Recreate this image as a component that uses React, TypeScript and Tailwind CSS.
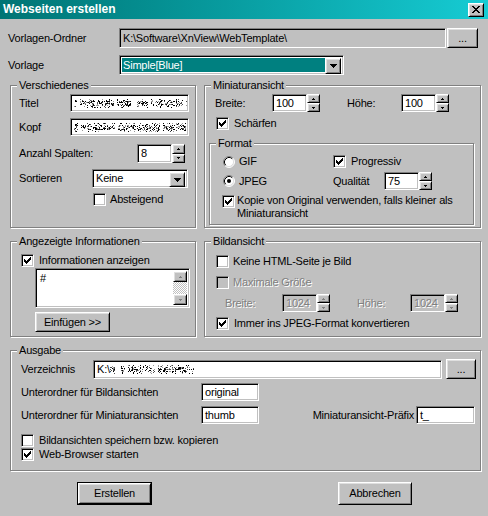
import React from "react";

const sunken =
  "border border-t-[#808080] border-l-[#808080] border-r-white border-b-white shadow-[inset_1px_1px_0_#000,inset_-1px_-1px_0_#c0c0c0]";
const raised =
  "border border-t-white border-l-white border-r-black border-b-black shadow-[inset_1px_1px_0_#dfdfdf,inset_-1px_-1px_0_#808080]";
const disabledText = "text-[#808080] [text-shadow:1px_1px_0_#ffffff]";

function rng(seed: number) {
  let s = seed;
  return () => {
    s = (s * 1103515245 + 12345) & 0x7fffffff;
    return s / 0x7fffffff;
  };
}

function Noise({ w, h, seed }: { w: number; h: number; seed: number }) {
  const r = rng(seed);
  const rects: React.ReactNode[] = [];
  let gap = 0;
  for (let x = 0; x < w; x++) {
    if (gap > 0) {
      gap--;
      continue;
    }
    if (r() < 0.05) {
      gap = 2;
      continue;
    }
    for (let y = 0; y < h; y++) {
      const mid = y >= 2 && y <= h - 3;
      const v = r();
      if (v < (mid ? 0.42 : 0.18)) {
        const t = r();
        const c = t < 0.5 ? "#000000" : t < 0.78 ? "#4a4a4a" : "#9a9a9a";
        rects.push(<rect key={x + "_" + y} x={x} y={y} width={1} height={1} fill={c} />);
      }
    }
  }
  return (
    <svg width={w} height={h} className="block shrink-0">
      {rects}
    </svg>
  );
}

function Pixels({ rows, color, className }: { rows: string[]; color: string; className?: string }) {
  const rects: React.ReactNode[] = [];
  rows.forEach((row, y) =>
    row.split("").forEach((ch, x) => {
      if (ch === "#") rects.push(<rect key={x + "-" + y} x={x} y={y} width={1} height={1} fill={color} />);
    })
  );
  return (
    <svg width={rows[0].length} height={rows.length} className={"block shrink-0 " + (className || "")}>
      {rects}
    </svg>
  );
}

const UPS = ["..#..", ".###."];
const DOWNS = [".###.", "..#.."];
const DOWN7 = ["#######", ".#####.", "..###..", "...#..."];
const CHECK = ["......#", ".....##", "#...###", "##.###.", "#####..", ".###...", "..#...."];
const XGLYPH = ["##....##", ".##..##.", "..####..", "...##...", "..####..", ".##..##.", "##....##"];

function Btn({ cls, children, def }: { cls: string; children: React.ReactNode; def?: boolean }) {
  if (def) {
    return (
      <div className={`border border-black ${cls} flex`}>
        <div className={`${raised} flex-1 bg-[#c0c0c0] flex items-center justify-center`}>{children}</div>
      </div>
    );
  }
  return <div className={`${raised} bg-[#c0c0c0] flex items-center justify-center ${cls}`}>{children}</div>;
}

function TextBox({ cls, children, disabled }: { cls: string; children?: React.ReactNode; disabled?: boolean }) {
  return (
    <div
      className={`${sunken} ${disabled ? "bg-[#c0c0c0] " + disabledText : "bg-white"} flex items-center pl-[3px] overflow-hidden whitespace-nowrap shrink-0 ${cls}`}
    >
      {children}
    </div>
  );
}

function Spin({ hc, disabled }: { hc: string; disabled?: boolean }) {
  const c = disabled ? "#808080" : "#000000";
  return (
    <div className={`flex flex-col w-[13px] shrink-0 ${hc}`}>
      <div className={`${raised} flex-1 bg-[#c0c0c0] flex items-center justify-center`}>
        <Pixels rows={UPS} color={c} />
      </div>
      <div className={`${raised} flex-1 bg-[#c0c0c0] flex items-center justify-center`}>
        <Pixels rows={DOWNS} color={c} />
      </div>
    </div>
  );
}

function Check({ checked, disabled, cls }: { checked?: boolean; disabled?: boolean; cls?: string }) {
  return (
    <div
      className={`${sunken} w-[13px] h-[13px] shrink-0 ${disabled ? "bg-[#c0c0c0]" : "bg-white"} flex items-center justify-center ${cls || ""}`}
    >
      {checked ? <Pixels rows={CHECK} color={disabled ? "#808080" : "#000"} /> : null}
    </div>
  );
}

function Radio({ checked }: { checked?: boolean }) {
  return (
    <svg width={12} height={12} className="block shrink-0">
      <circle cx={6} cy={6} r={5} fill="#ffffff" />
      <path d="M2.11 9.89 A5.5 5.5 0 0 1 9.89 2.11" stroke="#808080" fill="none" />
      <path d="M9.89 2.11 A5.5 5.5 0 0 1 2.11 9.89" stroke="#ffffff" fill="none" />
      <path d="M2.82 9.18 A4.5 4.5 0 0 1 9.18 2.82" stroke="#000000" fill="none" />
      <path d="M9.18 2.82 A4.5 4.5 0 0 1 2.82 9.18" stroke="#dfdfdf" fill="none" />
      {checked ? <circle cx={6} cy={6} r={2} fill="#000" /> : null}
    </svg>
  );
}

function Combo({ cls, children, sel, arrowH }: { cls: string; children: React.ReactNode; sel?: boolean; arrowH: string }) {
  return (
    <div className={`${sunken} bg-white flex p-[2px] shrink-0 ${cls}`}>
      <div
        className={`flex-1 flex items-center pl-[1px] ${sel ? "bg-[#008080] text-white" : ""} whitespace-nowrap overflow-hidden`}
      >
        {children}
      </div>
      <div className={`${raised} w-[16px] ${arrowH} bg-[#c0c0c0] flex items-center justify-center`}>
        <Pixels rows={DOWN7} color="#000" />
      </div>
    </div>
  );
}

function Group({ label, cls, children }: { label: string; cls: string; children?: React.ReactNode }) {
  return (
    <div className={`relative shrink-0 border border-[#808080] shadow-[inset_1px_1px_0_#ffffff,1px_1px_0_#ffffff] ${cls}`}>
      <span className="absolute -top-[7px] left-[6px] px-[2px] bg-[#c0c0c0] leading-[13px] whitespace-nowrap">
        {label}
      </span>
      {children}
    </div>
  );
}

export default function App() {
  return (
    <div className="font-['Liberation_Sans',Arial,sans-serif] text-[11px] tracking-[-0.2px] leading-[13px] text-black w-[488px] h-[516px] bg-[#c0c0c0] flex flex-col overflow-hidden select-none">
      {/* Title bar */}
      <div className="h-[19px] shrink-0 flex items-center bg-linear-to-r from-[#007474] to-[#16ccd4] pl-[3px] pr-[4px]">
        <span className="text-white font-bold text-[12px] tracking-normal flex-1 leading-[15px]">Webseiten erstellen</span>
        <div className={`${raised} w-[16px] h-[14px] bg-[#c0c0c0] flex items-center justify-center`}>
          <Pixels rows={XGLYPH} color="#000" />
        </div>
      </div>

      {/* Vorlagen-Ordner */}
      <div className="flex items-center pl-[8px] mt-[9px] h-[20px]">
        <div className="w-[111px]">Vorlagen-Ordner</div>
        <div className={`${sunken} w-[327px] h-[20px] bg-[#c0c0c0] flex items-center pl-[3px] whitespace-nowrap`}>
          K:\Software\XnView\WebTemplate\
        </div>
        <Btn cls="ml-[1px] w-[31px] h-[20px]">...</Btn>
      </div>

      {/* Vorlage */}
      <div className="flex items-center pl-[8px] mt-[7px] h-[20px]">
        <div className="w-[111px]">Vorlage</div>
        <Combo cls="w-[225px] h-[20px]" sel arrowH="h-[16px]">
          Simple[Blue]
        </Combo>
      </div>

      {/* Group row 1 */}
      <div className="flex pl-[10px] gap-[8px] mt-[10px]">
        <Group label="Verschiedenes" cls="w-[186px] h-[143px] pt-[8px] pl-[8px]">
          <div className="flex items-center h-[18px]">
            <div className="w-[51px]">Titel</div>
            <TextBox cls="w-[119px] h-[18px]">
              <Noise w={113} h={9} seed={7} />
            </TextBox>
          </div>
          <div className="flex items-center h-[18px] mt-[6px]">
            <div className="w-[51px]">Kopf</div>
            <TextBox cls="w-[119px] h-[18px]">
              <Noise w={112} h={9} seed={31} />
            </TextBox>
          </div>
          <div className="flex items-center h-[19px] mt-[8px]">
            <div className="w-[118px]">Anzahl Spalten:</div>
            <TextBox cls="w-[35px] h-[19px]">8</TextBox>
            <Spin hc="h-[19px]" />
          </div>
          <div className="flex items-center h-[19px] mt-[6px]">
            <div className="w-[73px]">Sortieren</div>
            <Combo cls="w-[96px] h-[19px]" arrowH="h-[15px]">
              Keine
            </Combo>
          </div>
          <div className="flex items-center h-[13px] mt-[5px] ml-[74px]">
            <Check />
            <span className="ml-[4px]">Absteigend</span>
          </div>
        </Group>

        <Group label="Miniaturansicht" cls="w-[277px] h-[143px] pt-[8px] pl-[4px]">
          <div className="flex items-center h-[18px] pl-[6px]">
            <div className="w-[57px]">Breite:</div>
            <TextBox cls="w-[35px] h-[18px]">100</TextBox>
            <Spin hc="h-[18px]" />
            <div className="ml-[27px] w-[54px]">Höhe:</div>
            <TextBox cls="w-[35px] h-[18px]">100</TextBox>
            <Spin hc="h-[18px]" />
          </div>
          <div className="flex items-center h-[13px] mt-[5px] pl-[7px]">
            <Check checked />
            <span className="ml-[5px]">Schärfen</span>
          </div>
          <Group label="Format" cls="mt-[13px] w-[265px] h-[82px] pt-[11px] pl-[13px]">
            <div className="flex items-center h-[13px]">
              <div className="w-[110px] flex items-center">
                <Radio />
                <span className="ml-[4px]">GIF</span>
              </div>
              <Check checked />
              <span className="ml-[5px]">Progressiv</span>
            </div>
            <div className="flex items-center h-[18px] mt-[4px]">
              <div className="w-[110px] flex items-center">
                <Radio checked />
                <span className="ml-[4px]">JPEG</span>
              </div>
              <div className="w-[51px]">Qualität</div>
              <TextBox cls="w-[35px] h-[18px]">75</TextBox>
              <Spin hc="h-[18px]" />
            </div>
            <div className="flex items-start mt-[4px] -ml-[1px]">
              <Check checked cls="mt-[1px]" />
              <span className="ml-[2px] leading-[13px]">
                Kopie von Original verwenden, falls kleiner als
                <br />
                Miniaturansicht
              </span>
            </div>
          </Group>
        </Group>
      </div>

      {/* Group row 2 */}
      <div className="flex pl-[10px] gap-[8px] mt-[13px]">
        <Group label="Angezeigte Informationen" cls="w-[186px] h-[96px] pt-[12px] pl-[10px]">
          <div className="flex items-center h-[13px]">
            <Check checked />
            <span className="ml-[5px]">Informationen anzeigen</span>
          </div>
          <div className={`${sunken} bg-white mt-[1px] ml-[14px] w-[155px] h-[40px] flex p-[2px]`}>
            <div className="flex-1 pl-[2px] pt-[1px]">#</div>
            <div className="w-[14px] flex flex-col">
              <div className={`${raised} h-[11px] bg-[#c0c0c0] flex items-center justify-center`}>
                <Pixels rows={UPS} color="#808080" />
              </div>
              <div className="flex-1 bg-[repeating-conic-gradient(#c0c0c0_0_25%,#ffffff_0_50%)] bg-size-[2px_2px]" />
              <div className={`${raised} h-[11px] bg-[#c0c0c0] flex items-center justify-center`}>
                <Pixels rows={DOWNS} color="#808080" />
              </div>
            </div>
          </div>
          <Btn cls="mt-[4px] ml-[14px] w-[75px] h-[20px]">Einfügen &gt;&gt;</Btn>
        </Group>

        <Group label="Bildansicht" cls="w-[277px] h-[96px] pt-[13px] pl-[11px]">
          <div className="flex items-center h-[13px]">
            <Check />
            <span className="ml-[4px]">Keine HTML-Seite je Bild</span>
          </div>
          <div className="flex items-center h-[13px] mt-[8px]">
            <Check disabled />
            <span className={`ml-[4px] ${disabledText}`}>Maximale Größe</span>
          </div>
          <div className="flex items-center h-[18px] mt-[5px] ml-[9px]">
            <div className={`w-[57px] ${disabledText}`}>Breite:</div>
            <TextBox cls="w-[35px] h-[18px]" disabled>
              1024
            </TextBox>
            <Spin hc="h-[18px]" disabled />
            <div className={`ml-[27px] w-[53px] ${disabledText}`}>Höhe:</div>
            <TextBox cls="w-[35px] h-[18px]" disabled>
              1024
            </TextBox>
            <Spin hc="h-[18px]" disabled />
          </div>
          <div className="flex items-center h-[13px] mt-[5px]">
            <Check checked />
            <span className="ml-[5px]">Immer ins JPEG-Format konvertieren</span>
          </div>
        </Group>
      </div>

      {/* Ausgabe */}
      <Group label="Ausgabe" cls="mt-[13px] ml-[10px] w-[471px] h-[121px] pt-[8px] pl-[10px]">
        <div className="flex items-center h-[20px]">
          <div className="w-[72px]">Verzeichnis</div>
          <TextBox cls="w-[349px] h-[19px]">
            <span>K:\</span>
            <Noise w={84} h={9} seed={99} />
          </TextBox>
          <Btn cls="ml-[4px] w-[30px] h-[20px]">...</Btn>
        </div>
        <div className="flex items-center h-[18px] mt-[4px]">
          <div className="w-[180px]">Unterordner für Bildansichten</div>
          <TextBox cls="w-[58px] h-[18px]">original</TextBox>
        </div>
        <div className="flex items-center h-[18px] mt-[5px] mr-[5px]">
          <div className="w-[180px]">Unterordner für Miniaturansichten</div>
          <TextBox cls="w-[58px] h-[18px]">thumb</TextBox>
          <div className="ml-auto">Miniaturansicht-Präfix</div>
          <TextBox cls="ml-[2px] w-[59px] h-[18px]">t_</TextBox>
        </div>
        <div className="flex items-center h-[13px] mt-[10px]">
          <Check />
          <span className="ml-[5px]">Bildansichten speichern bzw. kopieren</span>
        </div>
        <div className="flex items-center h-[13px] mt-[1px]">
          <Check checked />
          <span className="ml-[5px]">Web-Browser starten</span>
        </div>
      </Group>

      {/* Buttons */}
      <div className="flex mt-[11px]">
        <Btn def cls="ml-[77px] w-[75px] h-[23px]">
          Erstellen
        </Btn>
        <Btn cls="ml-[186px] w-[74px] h-[23px]">Abbrechen</Btn>
      </div>
    </div>
  );
}
